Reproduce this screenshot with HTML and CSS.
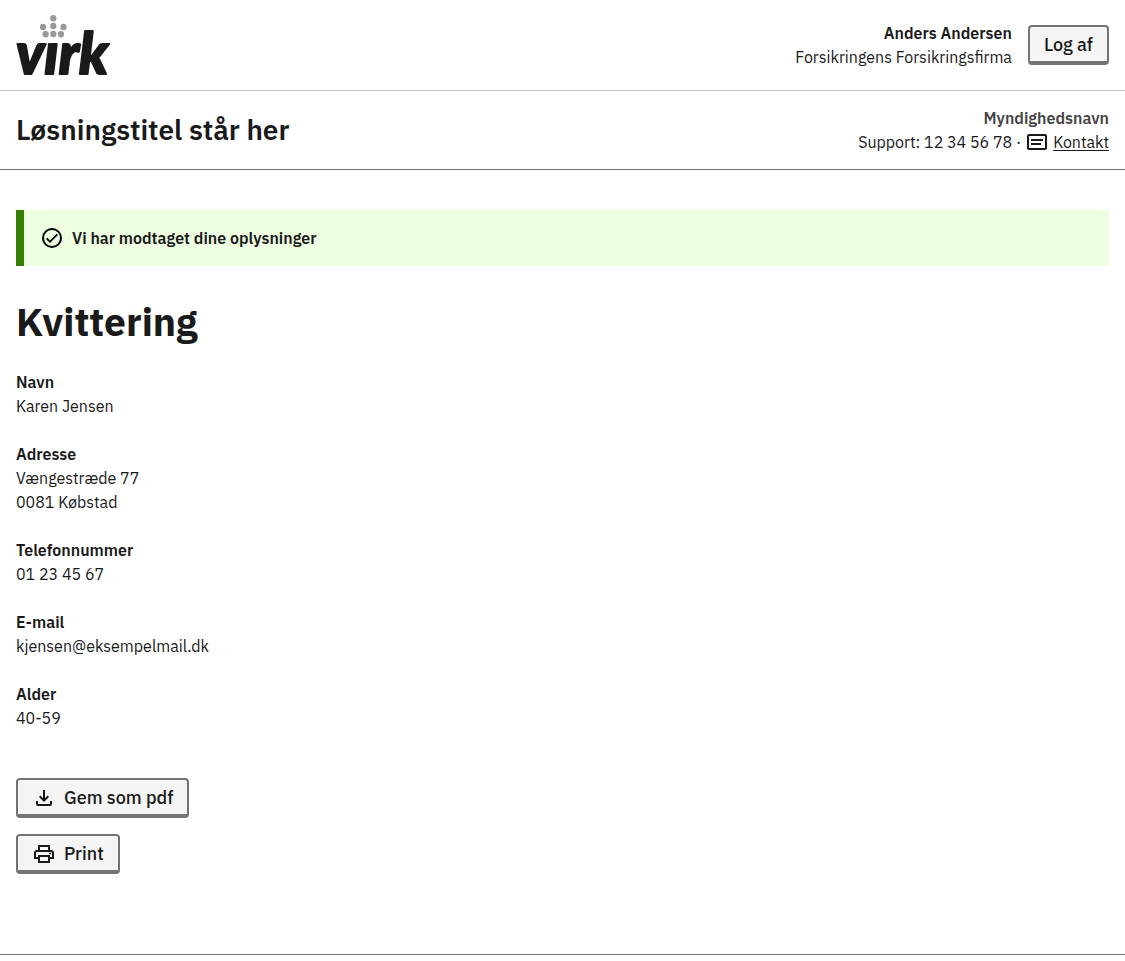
FILE: index.html
```html
<!DOCTYPE html>
<html lang="da">
<head>
<meta charset="utf-8">
<meta name="viewport" content="width=device-width, initial-scale=1">
<title>Kvittering</title>
<link rel="stylesheet" href="styles.css">
</head>
<body>
<header>
  <div class="portal-header">
    <svg class="logo" viewBox="0 0 96 60" role="img" aria-label="Virk">
      <g fill="#999">
        <ellipse cx="37.3" cy="3.2" rx="3.1" ry="3.2"/>
        <ellipse cx="27" cy="12" rx="3.1" ry="3.2"/>
        <ellipse cx="37.3" cy="11" rx="3.1" ry="3.2"/>
        <ellipse cx="47.5" cy="12" rx="3.1" ry="3.2"/>
        <ellipse cx="29.6" cy="19.3" rx="3.1" ry="3.2"/>
        <ellipse cx="37.3" cy="19" rx="3.1" ry="3.2"/>
        <ellipse cx="45" cy="19.3" rx="3.1" ry="3.2"/>
      </g>
      <text class="logo-text" x="0" y="59">vırk</text>
    </svg>
    <div class="user">
      <div class="user-info">
        <strong>Anders Andersen</strong>
        <span>Forsikringens Forsikringsfirma</span>
      </div>
      <button class="button" type="button">Log af</button>
    </div>
  </div>
  <div class="solution-header">
    <p class="solution-title">Løsningstitel står her</p>
    <div class="authority">
      <strong class="authority-name">Myndighedsnavn</strong>
      <div class="support">
        <span>Support: 12 34 56 78 ·</span>
        <svg class="icon" viewBox="0 0 24 24" aria-hidden="true"><path d="M20 4H4a2 2 0 0 0-2 2v12c0 1.100.9 2 2 2h16a2 2 0 0 0 2-2V6a2 2 0 0 0-2-2zm0 14H4V6h16v12zM6 9h12v2H6zm0 4h10v2H6z"/></svg>
        <a class="link" href="#kontakt">Kontakt</a>
      </div>
    </div>
  </div>
</header>
<main class="content">
  <div class="alert" role="status">
    <svg class="icon" viewBox="0 0 24 24" aria-hidden="true"><path d="M12 2a10 10 0 1 0 0 20 10 10 0 0 0 0-20zm0 18a8 8 0 1 1 0-16 8 8 0 0 1 0 16zm4.700-12.200L10 14.400l-2.700-2.700L6 13l4 4 8-8z"/></svg>
    <p class="alert-text">Vi har modtaget dine oplysninger</p>
  </div>
  <h1 class="heading">Kvittering</h1>
  <dl class="receipt">
    <div><dt>Navn</dt><dd>Karen Jensen</dd></div>
    <div><dt>Adresse</dt><dd>Vængestræde 77<br>0081 Købstad</dd></div>
    <div><dt>Telefonnummer</dt><dd>01 23 45 67</dd></div>
    <div><dt>E-mail</dt><dd>kjensen@eksempelmail.dk</dd></div>
    <div><dt>Alder</dt><dd>40-59</dd></div>
  </dl>
  <div class="actions">
    <button class="button" type="button">
      <svg class="icon" viewBox="0 0 24 24" aria-hidden="true"><path d="M11 4h2v8.200l2.600-2.600L17 11l-5 5-5-5 1.400-1.400 2.600 2.600zM4 15h2v3h12v-3h2v3a2 2 0 0 1-2 2H6a2 2 0 0 1-2-2z"/></svg>
      Gem som pdf
    </button>
    <button class="button" type="button">
      <svg class="icon" viewBox="0 0 24 24" aria-hidden="true"><path d="M19 8h-1V3H6v5H5a3 3 0 0 0-3 3v6h4v4h12v-4h4v-6a3 3 0 0 0-3-3zM8 5h8v3H8zm8 14H8v-4h8zm2-4v-2H6v2H4v-4a1 1 0 0 1 1-1h14a1 1 0 0 1 1 1v4z"/><circle cx="18" cy="11.500" r="1"/></svg>
      Print
    </button>
  </div>
</main>
<footer class="footer"></footer>
</body>
</html>
```
FILE: styles.css
```css
* {
  box-sizing: border-box;
}

body {
  margin: 0;
  background: #fff;
  color: #1a1a1a;
  font-family: "IBM Plex Sans", Roboto, "Liberation Sans", sans-serif;
  font-size: 16px;
  line-height: 24px;
}

strong,
dt {
  font-weight: 600;
}

.portal-header,
.solution-header {
  display: flex;
  align-items: center;
  justify-content: space-between;
  padding: 15px 16px;
}

.portal-header {
  border-bottom: 1px solid #bfbfbf;
}

.solution-header {
  border-bottom: 1px solid #747474;
}

.logo {
  width: 96px;
  height: 60px;
  overflow: visible;
}

.logo-text {
  fill: #1a1a1a;
  stroke: #1a1a1a;
  stroke-width: 2px;
  stroke-linejoin: round;
  font-family: Lato, sans-serif;
  font-size: 57px;
  font-style: italic;
  font-weight: 900;
}

.user {
  display: flex;
  align-items: center;
  gap: 16px;
}

.user-info,
.authority {
  display: flex;
  flex-direction: column;
  align-items: flex-end;
}

.authority-name {
  color: #454545;
}

.solution-title {
  margin: 0;
  font-size: 28px;
  font-weight: 600;
  line-height: 36px;
}

.support {
  display: flex;
  align-items: center;
  gap: 4px;
}

.link {
  color: inherit;
  text-underline-offset: 2px;
}

.icon {
  flex: none;
  width: 24px;
  height: 24px;
  fill: currentColor;
}

.button {
  display: inline-flex;
  align-items: center;
  gap: 8px;
  height: 40px;
  padding: 2px 14px 0;
  border: 2px solid #747474;
  border-bottom-width: 4px;
  border-radius: 4px;
  background: #f5f5f5;
  color: #1a1a1a;
  font-family: inherit;
  font-size: 18px;
  font-weight: 500;
  line-height: 24px;
}

.content {
  padding: 40px 16px 80px;
}

.alert {
  display: flex;
  align-items: center;
  gap: 8px;
  padding: 16px;
  border-left: 8px solid #358000;
  background: #eeffe1;
  color: #000;
}

.alert-text {
  margin: 0;
  color: #1a1a1a;
  font-weight: 600;
}

.heading {
  margin: 32px 0 24px;
  font-size: 39px;
  font-weight: 700;
  line-height: 48px;
}

.receipt {
  display: grid;
  gap: 24px;
  margin: 0 0 48px;
}

.receipt dd {
  margin: 0;
}

.actions {
  display: flex;
  flex-direction: column;
  align-items: flex-start;
  gap: 16px;
}

.footer {
  border-top: 1px solid #747474;
}
```
